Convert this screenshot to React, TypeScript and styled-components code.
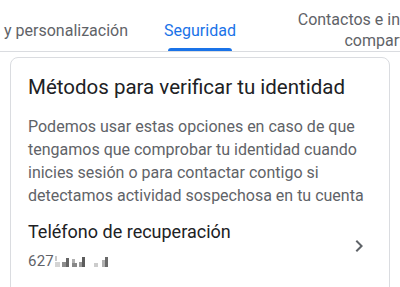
import React, { useLayoutEffect, useRef } from 'react';
import styled, { createGlobalStyle } from 'styled-components';

const GlobalStyle = createGlobalStyle`
  html, body {
    margin: 0;
    padding: 0;
    background: #ffffff;
  }
  body {
    font-family: Roboto, "Noto Sans", Arial, sans-serif;
    -webkit-font-smoothing: antialiased;
  }
`;

const Page = styled.div`
  width: 400px;
  height: 287px;
  overflow: hidden;
  background: #ffffff;
  display: flex;
  flex-direction: column;
`;

const TabBar = styled.nav`
  display: flex;
  align-items: stretch;
  height: 52px;
  flex-shrink: 0;
  border-bottom: 1px solid #dadce0;
  box-sizing: border-box;
  overflow-x: auto;
  scrollbar-width: none;

  &::-webkit-scrollbar {
    display: none;
  }
`;

const Tab = styled.button<{ $active?: boolean; $wrap?: number }>`
  position: relative;
  flex-shrink: 0;
  display: flex;
  align-items: center;
  justify-content: center;
  padding: 9px 18px 0;
  margin: 0;
  border: none;
  background: none;
  cursor: pointer;
  font-family: Roboto, "Noto Sans", Arial, sans-serif;
  font-size: 16px;
  font-weight: 400;
  line-height: 21px;
  text-align: center;
  white-space: ${({ $wrap }) => ($wrap ? 'normal' : 'nowrap')};
  color: ${({ $active }) => ($active ? '#1a73e8' : '#5f6368')};

  span {
    display: block;
    width: ${({ $wrap }) => ($wrap ? `${$wrap}px` : 'auto')};
  }

  &::after {
    content: '';
    display: ${({ $active }) => ($active ? 'block' : 'none')};
    position: absolute;
    left: 22px;
    right: 22px;
    bottom: 0;
    height: 3px;
    border-radius: 3px 3px 0 0;
    background: #1a73e8;
  }
`;

const Card = styled.section`
  flex-shrink: 0;
  margin: 5px 10px 0;
  border: 1px solid #dadce0;
  border-radius: 8px;
  padding-top: 15px;
  display: flex;
  flex-direction: column;
`;

const CardHeader = styled.div`
  padding: 0 17px;
  display: flex;
  flex-direction: column;
  gap: 14px;
`;

const Title = styled.h2`
  margin: 0;
  font-size: 20.5px;
  line-height: 28px;
  font-weight: 400;
  color: #202124;
`;

const Description = styled.p`
  margin: 0;
  font-size: 16px;
  line-height: 23px;
  color: #5f6368;
`;

const ItemRow = styled.a`
  display: flex;
  align-items: center;
  gap: 12px;
  padding: 13px 18px 28px 17px;
  text-decoration: none;
  cursor: pointer;
`;

const ItemText = styled.div`
  flex: 1;
  display: flex;
  flex-direction: column;
  gap: 7px;
`;

const ItemLabel = styled.div`
  font-size: 18px;
  line-height: 24px;
  color: #202124;
`;

const ItemValue = styled.div`
  display: flex;
  align-items: center;
  font-size: 15px;
  line-height: 20px;
  color: #5f6368;
  letter-spacing: 0.2px;
`;

const Chevron = styled.svg`
  width: 24px;
  height: 24px;
  fill: #5f6368;
  flex-shrink: 0;
`;

const Masked = () => (
  <svg width="66" height="12" viewBox="0 0 66 12" style={{ marginLeft: 1, marginTop: 2 }}>
    <rect x="0" y="0" width="2" height="5" fill="#c8c8c8" />
    <rect x="0" y="6" width="5" height="5" fill="#d4d4d4" />
    <rect x="7" y="6" width="4" height="5" fill="#8e8e8e" />
    <rect x="11" y="2" width="3" height="9" fill="#666666" />
    <rect x="17" y="3" width="3" height="4" fill="#b0b0b0" />
    <rect x="17" y="7" width="5" height="4" fill="#888888" />
    <rect x="24" y="6" width="3" height="5" fill="#999999" />
    <rect x="27" y="1" width="3" height="10" fill="#5c5c5c" />
    <rect x="39" y="7" width="4" height="4" fill="#cccccc" />
    <rect x="47" y="4" width="3" height="7" fill="#b0b0b0" />
    <rect x="50" y="1" width="3" height="10" fill="#6a6a6a" />
  </svg>
);

const tabs = [
  { label: 'Inicio' },
  { label: 'Información personal' },
  { label: 'Datos y personalización' },
  { label: 'Seguridad', active: true },
  { label: 'Contactos e información compartida', wrap: 227 },
  { label: 'Pagos y suscripciones' },
];

export default function App() {
  const barRef = useRef<HTMLElement>(null);
  const activeRef = useRef<HTMLButtonElement>(null);

  useLayoutEffect(() => {
    const bar = barRef.current;
    const tab = activeRef.current;
    if (bar && tab) {
      bar.scrollLeft = tab.offsetLeft + tab.offsetWidth / 2 - bar.clientWidth / 2;
    }
  }, []);

  return (
    <>
      <GlobalStyle />
      <Page>
        <TabBar ref={barRef}>
          {tabs.map((t) => (
            <Tab
              key={t.label}
              ref={t.active ? activeRef : undefined}
              $active={t.active}
              $wrap={t.wrap}
            >
              <span>{t.label}</span>
            </Tab>
          ))}
        </TabBar>
        <Card>
          <CardHeader>
            <Title>Métodos para verificar tu identidad</Title>
            <Description>
              Podemos usar estas opciones en caso de que tengamos que comprobar tu identidad
              cuando inicies sesión o para contactar contigo si detectamos actividad
              sospechosa en tu cuenta
            </Description>
          </CardHeader>
          <ItemRow>
            <ItemText>
              <ItemLabel>Teléfono de recuperación</ItemLabel>
              <ItemValue>
                627
                <Masked />
              </ItemValue>
            </ItemText>
            <Chevron viewBox="0 0 24 24">
              <path d="M10 6L8.59 7.41 13.17 12l-4.58 4.59L10 18l6-6z" />
            </Chevron>
          </ItemRow>
        </Card>
      </Page>
    </>
  );
}
